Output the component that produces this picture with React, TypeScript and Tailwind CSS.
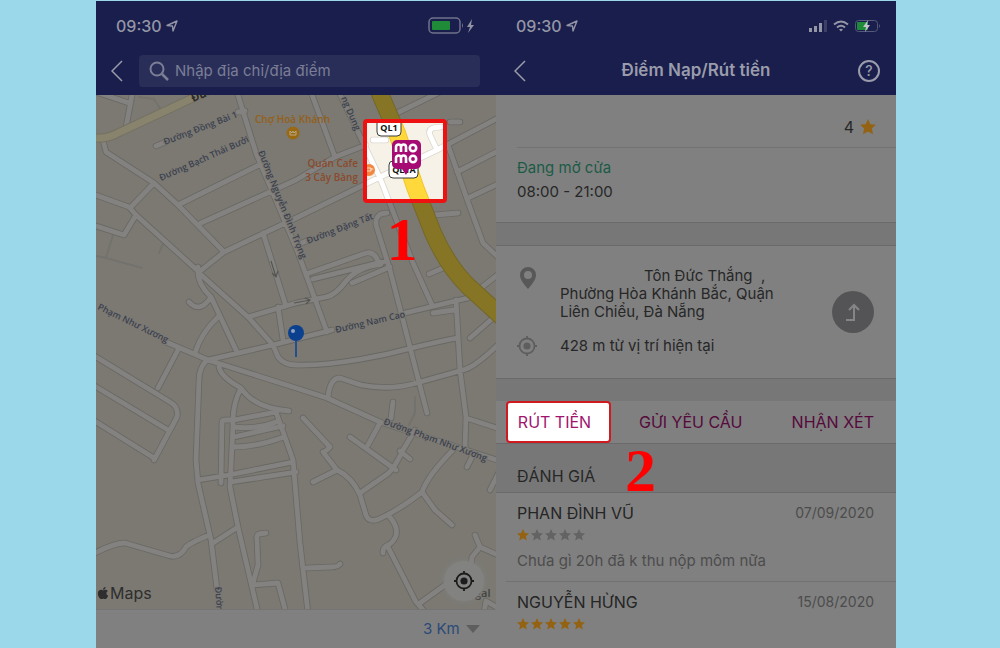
import React from 'react';
import { FaApple } from 'react-icons/fa';

const ROADS = [
    "M37 -5L30 32",
    "M0 -3L33 8",
    "M7 45L10 57L58 88L82 110L128 157",
    "M58 88L35 112",
    "M-3 99L33 112L40 120L103 177",
    "M40 120L28 140L-3 130",
    "M60 51L72 46",
    "M142 17L149 16",
    "M82 110L163 70",
    "M105 128L200 85L239 62L270 50",
    "M103 177L128 157L200 123L282 83L341 55L404 22",
    "M141 -3L160 58L201 155L231 237",
    "M215 -3L239 62",
    "M243 -3L261 35L284 83L317 168L336 210",
    "M291 118Q279 118 280 130L294 175L331 318",
    "M297 20L344 -3",
    "M277 45L290 45",
    "M354 27L364 27",
    "M345 32Q331 32 334 40L341 55",
    "M352 50L372 107L387 148L404 164",
    "M361 77L404 55",
    "M372 103L404 88",
    "M339 120L362 118",
    "M333 179L352 171",
    "M213 178L270 158Q280 156 283 170",
    "M217 184L290 166",
    "M201 150L215 144",
    "M167 138L189 208",
    "M102 172Q100 188 115 202L140 255",
    "M93 207Q104 219 115 202",
    "M122 222Q105 238 99 258",
    "M103 178L152 222L177 250L182 262Q188 270 200 270C240 271 290 260 316 253Q345 246 361 243",
    "M70 247L112 265L200 293L231 303L284 327L404 366",
    "M112 265L177 250L236 235",
    "M309 218L372 203L404 178",
    "M152 222L200 208L230 202Q240 200 250 186Q262 172 285 169",
    "M182 212L187 245",
    "M256 188L294 172",
    "M83 253L62 293",
    "M-3 260L74 307Q83 312 81 322L58 365",
    "M-3 290L72 335",
    "M-3 325L58 363",
    "M111 265Q103 273 103 285L100 365L102 388L115 445L121 494",
    "M123 272Q125 282 145 293Q158 313 193 316",
    "M145 293Q136 310 137 330L134 392L142 432L162 518",
    "M125 388L126 327Q126 325 130 325L138 325L180 317L197 365L204 448L212 518",
    "M138 332Q160 335 183 326",
    "M138 342L187 331",
    "M138 352Q160 352 188 342",
    "M102 385L133 380L197 367",
    "M135 387L200 377",
    "M-3 459Q18 448 29 448L74 461Q84 463 90 452Q94 448 113 440",
    "M117 448L142 432",
    "M170 438L163 439Q160 440 161 445L162 470L157 488",
    "M157 490L182 488L190 518",
    "M232 302Q234 283 244 283L265 290Q295 296 324 287L367 275Q378 273 404 248",
    "M360 205L364 275L370 322L369 352",
    "M337 218L358 215",
    "M374 243L397 223",
    "M370 323L404 334",
    "M297 307L295 323",
    "M284 328L272 350",
    "M207 323L234 352Q228 358 227 357L241 375Q256 382 264 400L270 420Q273 428 283 424Q303 415 326 397Q332 380 357 355",
    "M319 335L307 355Q297 376 290 380L264 398",
    "M254 342L300 375",
    "M304 356L314 364",
    "M217 387L241 375",
    "M326 397L339 415L356 430",
    "M292 420Q308 437 294 449Q286 452 287 458",
    "M292 452L320 507L330 518",
    "M324 508L349 490",
    "M375 470L376 462L384 452L404 461",
    "M379 440L384 452",
    "M211 473L235 472Q242 472 244 469",
    "M371 372L376 362",
    "M394 395L404 375",
    "M388 518L390 506L404 514",
];

const FOOTPATHS = ["M43 2L58 4L65 15", "M17 140L10 163L46 173M10 163L0 161", "M67 149L63 158", "M319 302L319 318L313 330"];

const HIGHWAY = "M282 -6L301 38L319 92L337 138Q351 170 372 191L406 222";

interface MapPalette {
    land: string,
    casing: string,
    road: string,
    highway: string,
    highwayEdge: string,
    poi: string,
}

const DIMMED: MapPalette = { land: "#7b7972", casing: "#696863", road: "#838280", highway: "#857524", highwayEdge: "#74672a", poi: "#8c5130" };
const BRIGHT: MapPalette = { land: "#f6f2e7", casing: "#dcd8d0", road: "#ffffff", highway: "#ffd93b", highwayEdge: "#efc52c", poi: "#f4873f" };

const MapTiles: React.FC<{ palette: MapPalette }> = ({ palette }) => (
    <g fill="none" strokeLinecap="round" strokeLinejoin="round">
        <rect width="400" height="514" fill={palette.land} />
        <path d={FOOTPATHS.join("")} stroke="#73726c" strokeWidth="2" />
        <path d={ROADS.join("")} stroke={palette.casing} strokeWidth="6.5" />
        <path d={ROADS.join("")} stroke={palette.road} strokeWidth="4.8" />
        <path d={HIGHWAY} stroke={palette.highwayEdge} strokeWidth="18" />
        <path d={HIGHWAY} stroke={palette.highway} strokeWidth="16" />
        <circle cx="273" cy="75" r="6" fill={palette.poi} />
        <path d="M271 73h4v3h-4zM275 74h2" stroke="#fff" strokeWidth="1" strokeOpacity="0.7" />
    </g>
);

const STREETS = [
    { name: "Đường Đồng Bài 1", x: 69, y: 50, angle: -21 },
    { name: "Đường Bạch Thái Bưởi", x: 65, y: 86, angle: -24 },
    { name: "Đường Nguyễn Đình Trọng", x: 162, y: 57, angle: 68 },
    { name: "Đường Đặng Tất", x: 212, y: 149, angle: -21 },
    { name: "Đường Nam Cao", x: 240, y: 238, angle: -13 },
    { name: "Đường Phạm Như Xương", x: 287, y: 329, angle: 20 },
    { name: "Phạm Như Xương", x: 1, y: 214, angle: 26 },
    { name: "ng Dung", x: 245, y: 3, angle: 67 },
    { name: "Đườn", x: 119, y: 492, angle: 86 },
];

const StreetMap = () => (
    <svg viewBox="0 0 400 514" className="block w-full font-['Open_Sans','Noto_Sans',sans-serif]" role="img" aria-label="Bản đồ">
        <defs>
            <clipPath id="spot">
                <rect x="269" y="26" width="80" height="80" />
            </clipPath>
        </defs>
        <MapTiles palette={DIMMED} />
        <path d="M0 43Q12 44 24 37L67 17L118 -7" fill="none" stroke="#747063" strokeWidth="9" />
        <path d="M0 43Q12 44 24 37L67 17L118 -7" fill="none" stroke="#88836c" strokeWidth="7" />
        <g fill="#3c4150" stroke="#7b7972" strokeWidth="2" paintOrder="stroke" fontSize="9" fontWeight="600">
            {STREETS.map((s) => (
                <text key={s.name} transform={`translate(${s.x} ${s.y}) rotate(${s.angle})`}>{s.name}</text>
            ))}
        </g>
        <text transform="translate(97 7) rotate(-22)" fontSize="11" fontWeight="700" fill="#2b2b2b">Đườ</text>
        <g fill="none" stroke="#55554f" strokeWidth="1.2">
            <path d="M175 166l5 16M176 178l4 4l2 -6" />
            <path d="M198 208l16 -3M209 203l5 2l-4 4" />
        </g>

        <g fontSize="10" fontWeight="600">
            <text x="159" y="28" fill="#946018">Chợ Hoà Khánh</text>
            <text x="262" y="72" fill="#8c4a2c" textAnchor="end">Quán Cafe</text>
            <text x="262" y="86" fill="#8c4a2c" textAnchor="end">3 Cây Bàng</text>
        </g>
        <circle cx="197" cy="38" r="6.5" fill="#9a6a12" />
        <path d="M194 36v4h6v-4M194 36l2 2l1 -2l1 2l2 -2" fill="none" stroke="#b7a98a" strokeWidth="1" />

        <g clipPath="url(#spot)">
            <MapTiles palette={BRIGHT} />
            <g fill="#fff" stroke="#3b3b3b" strokeWidth="1">
                <rect x="281" y="21" width="24" height="20" rx="4" />
                <rect x="293" y="66" width="29" height="17" rx="4" />
            </g>
            <g fontSize="9" fontWeight="700" fill="#111" textAnchor="middle">
                <text x="293" y="36">QL1</text>
                <text x="308" y="78">QL1A</text>
            </g>
            <path d="M301 45h19a5 5 0 0 1 5 5v19a5 5 0 0 1 -5 5h-7l-3 6l-4 -6h-5a5 5 0 0 1 -5 -5v-19a5 5 0 0 1 5 -5z" fill="#a50b73" />
            {/* momo lettering */}
            <g fill="none" stroke="#fff" strokeWidth="2.6">
                {[48, 59].map((y) => (
                    <g key={y} transform={`translate(299 ${y})`}>
                        <path d="M1 9v-5a2.4 2.4 0 0 1 5 0v5M6 4a2.4 2.4 0 0 1 5 0v5" />
                        <circle cx="18" cy="5" r="3.2" />
                    </g>
                ))}
            </g>
        </g>
        <rect x="269" y="26" width="80" height="80" rx="2" fill="none" stroke="#ee1111" strokeWidth="4" />
        <text x="306" y="165" textAnchor="middle" fontSize="62" fontWeight="700" fill="#ff0000" className="font-['Liberation_Serif',serif]">1</text>

        <path d="M200 244v18" stroke="#23508c" strokeWidth="2" />
        <circle cx="200" cy="238" r="8" fill="#0b408f" />
        <circle cx="197" cy="236" r="2" fill="#8fa3c4" />
        <text x="379" y="502" fontSize="11" fontWeight="600" fill="#3f3f3f">gal</text>
    </svg>
);

const BackIcon = () => (
    <svg viewBox="0 0 12 22" className="h-[22px] w-3" fill="none" stroke="currentColor" strokeWidth="1.5">
        <path d="M11 1L1 11L11 21" />
    </svg>
);

const Clock = () => (
    <div className="flex items-center gap-1 text-[16px] font-medium text-[#9496a6]">
        09:30
        <svg viewBox="0 0 12 12" className="size-3" fill="none" stroke="currentColor" strokeWidth="1.4" strokeLinejoin="round">
            <path d="M1 5.5L11 1L7 11L6.5 6z" />
        </svg>
    </div>
);

const Target: React.FC<{ className: string }> = ({ className }) => (
    <svg viewBox="0 0 22 22" className={className} fill="none" stroke="currentColor" strokeWidth="1.8">
        <circle cx="11" cy="11" r="7.5" />
        <circle cx="11" cy="11" r="3.6" fill="currentColor" stroke="none" />
        <path d="M11 1v3M11 18v3M1 11h3M18 11h3" />
    </svg>
);

const Star: React.FC<{ className: string }> = ({ className }) => (
    <svg viewBox="0 0 20 20" className={className} fill="currentColor">
        <path d="M10 0l3 6.500l7 .8l-5.200 4.700l1.500 7l-6.300 -3.500l-6.300 3.500l1.500 -7l-5.200 -4.700l7 -.8z" />
    </svg>
);

const MapPhone = () => (
    <section className="flex flex-col bg-[#808080]">
        <header className="bg-[#191e4c] pb-2">
            <div className="flex h-[50px] items-center justify-between px-5">
                <Clock />
                <svg viewBox="0 0 50 18" className="h-[18px] w-[50px]">
                    <rect x="3" y="1" width="31" height="15" rx="4" fill="none" stroke="#6f738b" strokeWidth="1.5" />
                    <rect x="6" y="4" width="18" height="9" rx="1" fill="#1f8a37" />
                    <path d="M36 6q2 2.500 0 5z" fill="#6f738b" />
                    <path d="M46 2l-5 8h3l-2 6l6 -8h-3z" fill="#9294a4" />
                </svg>
            </div>
            <div className="mt-1 flex h-8 items-center gap-4 pl-[15px] pr-4">
                <button type="button" aria-label="Quay lại" className="text-[#9a9cab]">
                    <BackIcon />
                </button>
                <label className="flex h-8 flex-1 items-center gap-1 rounded bg-[#292e59] px-2 text-[#7b7e95]">
                    <svg viewBox="0 0 24 24" className="size-6 shrink-0" fill="none" stroke="currentColor" strokeWidth="2">
                        <circle cx="10" cy="10" r="6.5" />
                        <path d="M15 15L21 21" strokeWidth="2.5" />
                    </svg>
                    <input
                        type="text"
                        aria-label="Nhập địa chỉ/địa điểm"
                        placeholder="Nhập địa chỉ/địa điểm"
                        className="w-full min-w-0 bg-transparent text-[15px] outline-none placeholder:text-[#7b7e95]"
                    />
                </label>
            </div>
        </header>
        <div className="relative">
            <StreetMap />
            <div className="absolute bottom-1 left-0 flex items-center text-[16px] text-[#2e2e2e]">
                <FaApple className="size-3.5" />
                Maps
            </div>
            <button
                type="button"
                aria-label="Vị trí của tôi"
                className="absolute bottom-2 right-3 flex size-10 items-center justify-center rounded-full bg-[#828280] text-[#1c1c1c] shadow-[0_0_6px_#828280]"
            >
                <Target className="size-[22px]" />
            </button>
        </div>
        <footer className="flex flex-1 items-center justify-end border-t border-[#747474] px-4 py-2">
            <label className="flex items-center gap-1.5">
                <select aria-label="Bán kính" className="appearance-none bg-transparent text-[15px] leading-5 text-[#2b4a78] outline-none">
                    <option>3 Km</option>
                </select>
                <svg viewBox="0 0 14 8" className="h-2 w-3.5" fill="#5e5e5e">
                    <path d="M0 0h14l-7 8z" />
                </svg>
            </label>
        </footer>
    </section>
);

interface Review {
    name: string,
    date: string,
    stars: number,
    comment?: string,
}

const REVIEWS: Review[] = [
    { name: "PHAN ĐÌNH VŨ", date: "07/09/2020", stars: 1, comment: "Chưa gì 20h đã k thu nộp môm nữa" },
    { name: "NGUYỄN HỪNG", date: "15/08/2020", stars: 5 },
];

const ReviewRow: React.FC<{ review: Review }> = ({ review }) => (
    <li className="ml-2.5 border-b border-[#727272] pb-2 pl-[11px] pr-[22px] pt-2 last:border-b-0">
        <div className="flex items-center justify-between">
            <h3 className="text-[16px] leading-6 text-[#252525]">{review.name}</h3>
            <time className="text-[14px] leading-6 text-[#4c4c4c]">{review.date}</time>
        </div>
        <div className="mt-1 flex gap-0.5" role="img" aria-label={`${review.stars} / 5`}>
            {[1, 2, 3, 4, 5].map((n) => (
                <Star key={n} className={n <= review.stars ? "size-3 text-[#936213]" : "size-3 text-[#636363]"} />
            ))}
        </div>
        {review.comment && <p className="mt-2 text-[15px] leading-6 text-[#4c4c4c]">{review.comment}</p>}
    </li>
);

const DetailPhone = () => (
    <section className="flex flex-col bg-[#808080] text-[15px] text-[#272727]">
        <header className="bg-[#191e4c] pb-2">
            <div className="flex h-[50px] items-center justify-between pl-5 pr-[15px]">
                <Clock />
                <svg viewBox="0 0 72 14" className="h-3.5 w-[72px]" fill="#9496a6">
                    <rect x="0" y="9" width="3" height="4" />
                    <rect x="5" y="7" width="3" height="6" />
                    <rect x="10" y="4" width="3" height="9" />
                    <rect x="15" y="1" width="3" height="12" fill="#3c4065" />
                    <g fill="none" stroke="#9496a6" strokeWidth="2">
                        <path d="M25 5.500q7 -6 14 0" />
                        <path d="M28 8.500q4 -3.500 8 0" />
                    </g>
                    <path d="M30 10.500q2 -1.500 4 0l-2 2z" />
                    <rect x="46.500" y="1.500" width="22" height="11" rx="3" fill="none" stroke="#55597a" />
                    <rect x="48" y="3" width="11" height="8" rx="1" fill="#1f8a37" />
                    <path d="M59 1l-5 7h3l-1 5l5 -7h-3z" fill="#c3c4cc" />
                    <path d="M70 5q2 2 0 4z" fill="#55597a" />
                </svg>
            </div>
            <div className="mt-1 flex h-8 items-center justify-between pl-[18px] pr-4 text-[#9a9cab]">
                <button type="button" aria-label="Quay lại">
                    <BackIcon />
                </button>
                <h1 className="pl-2 text-[17px] font-semibold">Điểm Nạp/Rút tiền</h1>
                <button type="button" aria-label="Trợ giúp" className="flex size-[22px] items-center justify-center rounded-full border-2 border-current text-[14px] font-medium leading-none">
                    ?
                </button>
            </div>
        </header>

        <div className="border-b border-[#6a6a6a] pb-[18px] pl-[21px]">
            <div className="flex h-[53px] items-center justify-end gap-1.5 border-b border-[#727272] pr-5 pt-3 text-[16px]">
                4
                <Star className="size-4 text-[#936213]" />
            </div>
            <p className="mt-2 leading-6 text-[#1b5b46]">Đang mở cửa</p>
            <p className="leading-6">08:00 - 21:00</p>
        </div>
        <div className="h-[22px] bg-[#777777]" />

        <div className="flex items-center border-y border-[#6a6a6a] py-[21px] pl-5 pr-[22px]">
            <div className="flex flex-1 flex-col gap-3.5">
                <div className="flex gap-5">
                    <svg viewBox="0 0 16 22" className="mx-1 h-[22px] w-4 shrink-0" fill="#585858">
                        <path fillRule="evenodd" d="M8 0a8 8 0 0 1 8 8c0 5 -4 9 -8 14c-4 -5 -8 -9 -8 -14a8 8 0 0 1 8 -8zM8 4a4 4 0 1 0 0 8a4 4 0 0 0 0 -8z" />
                    </svg>
                    <address className="leading-[18px] not-italic">
                        <span className="pl-[84px]">Tôn Đức Thắng&nbsp; ,</span>
                        <br />
                        Phường Hòa Khánh Bắc, Quận
                        <br />
                        Liên Chiểu, Đà Nẵng
                    </address>
                </div>
                <div className="flex items-center gap-[22px]">
                    <Target className="size-[22px] text-[#5e5e5e]" />
                    <p className="leading-5">428 m từ vị trí hiện tại</p>
                </div>
            </div>
            <button type="button" aria-label="Chỉ đường" className="flex size-[42px] items-center justify-center rounded-full bg-[#545457]">
                <svg viewBox="0 0 20 20" className="size-5" fill="none" stroke="#858585" strokeWidth="2">
                    <path d="M3 18h8V3M6 8l5 -5l5 5" />
                </svg>
            </button>
        </div>
        <div className="h-[22px] bg-[#777777]" />

        <nav className="flex items-center gap-7 border-b border-[#6a6a6a] pl-2.5 pr-[22px] text-[16px] leading-6 text-[#560a3c]">
            <button type="button" className="w-[105px] rounded-sm border-2 border-[#cf1a22] bg-white py-[7px] pr-2 text-[#a0146e]">RÚT TIỀN</button>
            <button type="button">GỬI YÊU CẦU</button>
            <button type="button" className="ml-auto">NHẬN XÉT</button>
        </nav>

        <div className="relative border-b border-[#6a6a6a] bg-[#777777] pb-1 pl-[21px] pt-5">
            <h2 className="text-[16px] leading-6">ĐÁNH GIÁ</h2>
            <span className="absolute left-[129px] top-0 font-['Liberation_Serif',serif] text-[62px] font-bold leading-[52px] text-[#ff0000]">2</span>
        </div>
        <ul>
            {REVIEWS.map((review) => (
                <ReviewRow key={review.name} review={review} />
            ))}
        </ul>
    </section>
);

const App = () => {
    return (
        <main className="grid min-h-screen grid-cols-2 bg-[#9ad8ea] pl-[9.6%] pr-[10.4%] pt-px font-['Inter','Noto_Sans',sans-serif]">
            <MapPhone />
            <DetailPhone />
        </main>
    )
}

export default App;
